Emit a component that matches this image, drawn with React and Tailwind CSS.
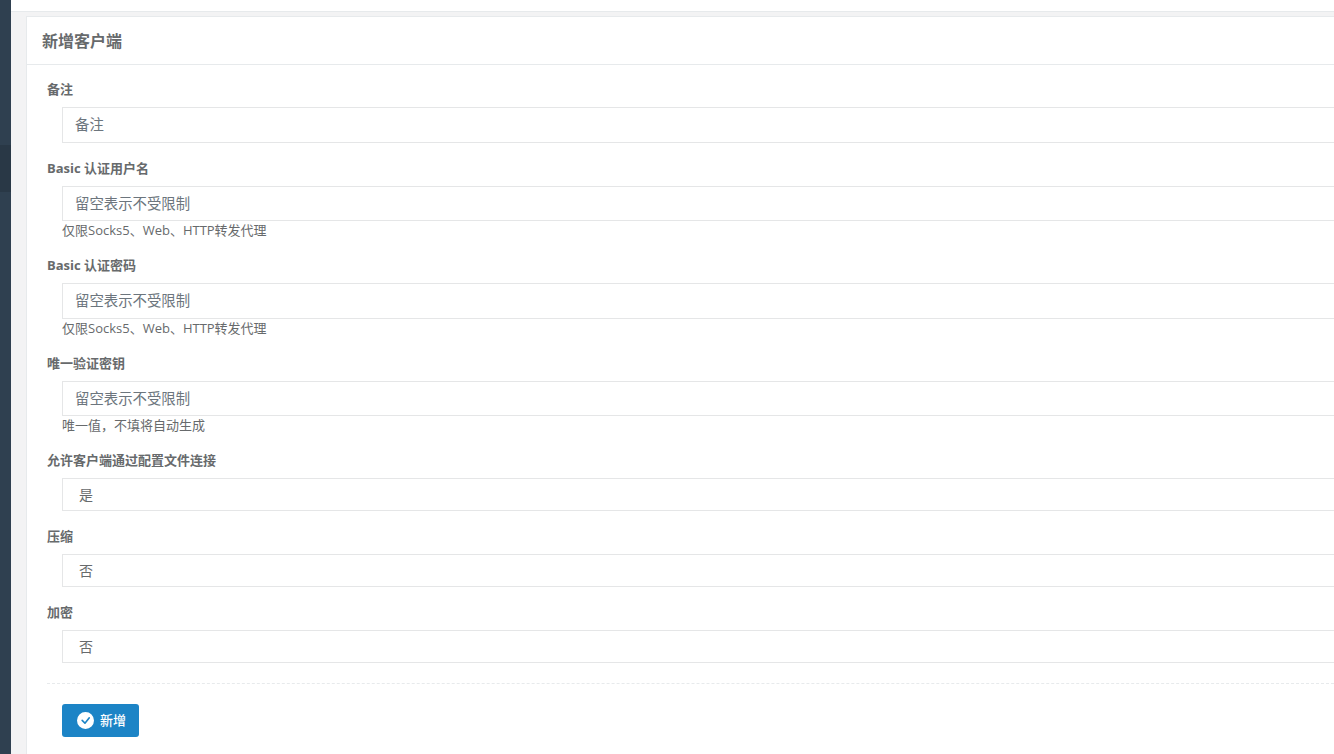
import { BsCheckCircleFill } from "react-icons/bs";

const font = "font-['Open_Sans','Noto_Sans_CJK_SC',sans-serif]";

function Label({ children }) {
  return (
    <label className="block text-[13px] leading-[18px] mb-[9px] font-bold text-[#676a6c] pl-[20px]">
      {children}
    </label>
  );
}

function TextField({ label, placeholder, help, height, after }) {
  return (
    <div className={after}>
      <Label>{label}</Label>
      <div className="pl-[35px]">
        <input
          type="text"
          placeholder={placeholder}
          className={`block w-full ${height} border border-[#e5e6e7] px-3 pb-[1px] text-[14.4px] text-[#676a6c] placeholder:text-[#6c757d] bg-white outline-none`}
        />
        {help && <p className="text-[13px] leading-[18px] text-[#676a6c]">{help}</p>}
      </div>
    </div>
  );
}

function SelectField({ label, value, after }) {
  return (
    <div className={after}>
      <Label>{label}</Label>
      <div className="pl-[35px]">
        <div className="h-[33px] border border-[#e5e6e7] pl-4 text-[14px] leading-[31px] text-[#676a6c] bg-white">
          {value}
        </div>
      </div>
    </div>
  );
}

export default function App() {
  return (
    <div className={`flex w-screen h-screen overflow-hidden bg-[#f3f3f4] ${font}`}>
      {/* sidebar, only a sliver is visible */}
      <div className="w-[11px] shrink-0 bg-[#2f4050] flex flex-col">
        <div className="h-[145px]" />
        <div className="h-[47px] bg-[#293846]" />
      </div>

      <div className="flex-1 min-w-0">
        <div className="h-[12px] bg-white border-b border-[#e7eaec]" />

        {/* the card runs past the right edge of the window */}
        <div className="ml-[15px] mr-[-30px] mt-[4px] bg-white border-l border-t border-[#e7eaec] h-[800px]">
          <div className="h-[48px] border-b border-[#e7eaec] pl-[15px] flex items-center">
            <h5 className="text-[16px] font-bold text-[#676a6c]">新增客户端</h5>
          </div>

          <div className="pt-[15px]">
            <TextField label="备注" placeholder="备注" height="h-[36px]" after="mb-[16px]" />
            <TextField
              label="Basic 认证用户名"
              placeholder="留空表示不受限制"
              help="仅限Socks5、Web、HTTP转发代理"
              height="h-[35px]"
              after="mb-[17px]"
            />
            <TextField
              label="Basic 认证密码"
              placeholder="留空表示不受限制"
              help="仅限Socks5、Web、HTTP转发代理"
              height="h-[36px]"
              after="mb-[17px]"
            />
            <TextField
              label="唯一验证密钥"
              placeholder="留空表示不受限制"
              help="唯一值，不填将自动生成"
              height="h-[35px]"
              after="mb-[17px]"
            />
            <SelectField label="允许客户端通过配置文件连接" value="是" after="mb-[16px]" />
            <SelectField label="压缩" value="否" after="mb-[16px]" />
            <SelectField label="加密" value="否" />

            <div className="ml-[20px] mt-[20px] mb-[20px] border-t border-dashed border-[#e7eaec]" />

            <div className="pl-[35px]">
              <button className="w-[77px] h-[33px] rounded-[3px] bg-[#1c84c6] text-white text-[13px] font-medium flex items-center pl-[15px] gap-[6px]">
                <BsCheckCircleFill className="w-[17px] h-[17px]" />
                新增
              </button>
            </div>
          </div>
        </div>
      </div>
    </div>
  );
}
